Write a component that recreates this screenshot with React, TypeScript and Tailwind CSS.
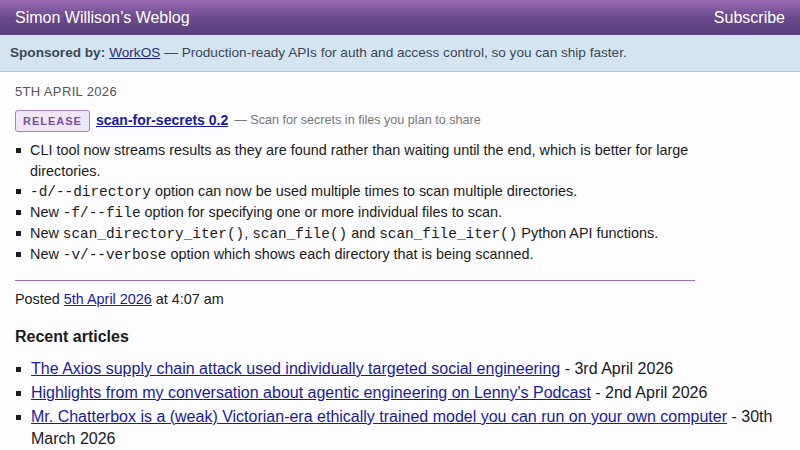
const mono = "font-['Liberation_Mono',monospace] leading-none";

const changes = [
  <>CLI tool now streams results as they are found rather than waiting until the end, which is better for large directories.</>,
  <><code className={mono}>-d/--directory</code> option can now be used multiple times to scan multiple directories.</>,
  <>New <code className={mono}>-f/--file</code> option for specifying one or more individual files to scan.</>,
  <>New <code className={mono}>scan_directory_iter()</code>, <code className={mono}>scan_file()</code> and <code className={mono}>scan_file_iter()</code> Python API functions.</>,
  <>New <code className={mono}>-v/--verbose</code> option which shows each directory that is being scanned.</>,
];

const recent = [
  { title: 'The Axios supply chain attack used individually targeted social engineering', date: '3rd April 2026' },
  { title: "Highlights from my conversation about agentic engineering on Lenny's Podcast", date: '2nd April 2026' },
  { title: 'Mr. Chatterbox is a (weak) Victorian-era ethically trained model you can run on your own computer', date: '30th March 2026' },
];

const App = () => {
  return (
    <div className="min-h-[450px] bg-[#fdfcfe] font-['Liberation_Sans',Arial,sans-serif] text-[#1a1a1a]">
      <header className="flex h-[35px] items-center justify-between bg-gradient-to-b from-[#9d6cb6] via-[#6a4a8c] to-[#5b3f7e] px-[15px] text-[16px] text-white">
        <span>Simon Willison’s Weblog</span>
        <span>Subscribe</span>
      </header>

      <div className="flex h-[37px] items-center border-b border-[#b9c6d3] bg-[#d5e4f1] px-[10px] text-[13.6px] text-[#3b4856]">
        <strong className="font-bold">Sponsored by:</strong>
        <a href="#" className="ml-[4px] text-[#2b2f7a] underline decoration-[#1b1f8a]">WorkOS</a>
        <span className="ml-[4px]">— Production-ready APIs for auth and access control, so you can ship faster.</span>
      </div>

      <main className="px-[15px]">
        <div className="mt-[10px] text-[13px] uppercase tracking-[0.35px] text-[#555]">5th April 2026</div>

        <div className="mt-[8px] flex items-center">
          <span className="rounded-[3px] border border-[#a77fc4] bg-[#efe6f6] px-[7px] py-[2px] text-[11px] font-bold tracking-[1px] text-[#7a519b]">
            RELEASE
          </span>
          <a href="#" className="ml-[6px] text-[14px] font-bold text-[#1a1a9c] underline decoration-[#1a1a9c]">
            scan-for-secrets 0.2
          </a>
          <span className="ml-[6px] text-[12.6px] text-[#777]">— Scan for secrets in files you plan to share</span>
        </div>

        <ul className="mt-[8px] w-[680px] text-[14.4px] leading-[20.7px]">
          {changes.map((c, i) => (
            <li key={i} className="relative pl-[15px]">
              <span className="absolute left-[1px] top-[8px] h-[5px] w-[5px] bg-[#1a1a1a]" />
              {c}
            </li>
          ))}
        </ul>

        <div className="mt-[16px] h-px w-[680px] bg-[#9b6bb5]" />

        <p className="mt-[8px] text-[14.4px]">
          Posted <a href="#" className="text-[#1a1a9c] underline">5th April 2026</a> at 4:07 am
        </p>

        <h3 className="mt-[14px] text-[16px] font-bold">Recent articles</h3>

        <ul className="mt-[9px] text-[16px] leading-[22px]">
          {recent.map((r, i) => (
            <li key={i} className="relative mb-[2px] pl-[16px]">
              <span className="absolute left-[1px] top-[9px] h-[5px] w-[5px] bg-[#1a1a1a]" />
              <a href="#" className="text-[#1a1a9c] underline">{r.title}</a> - {r.date}
            </li>
          ))}
        </ul>
      </main>
    </div>
  );
};

export default App;
